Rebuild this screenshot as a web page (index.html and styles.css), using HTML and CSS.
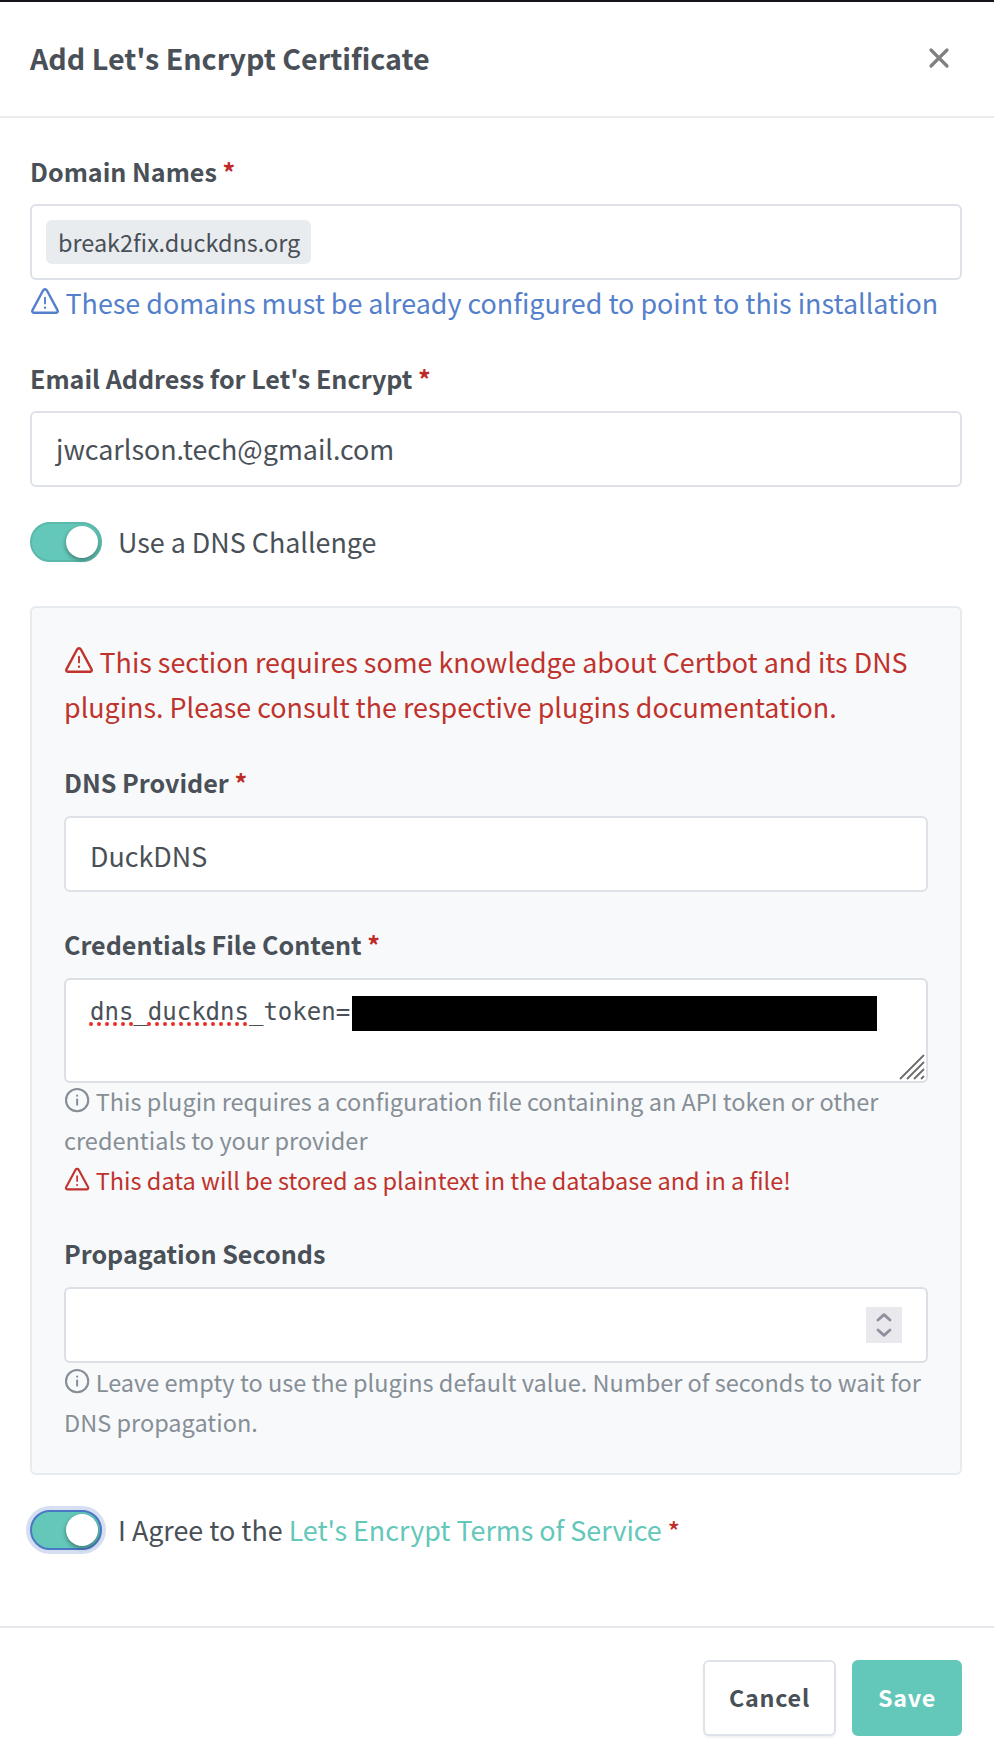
FILE: index.html
```html
<!DOCTYPE html>
<html lang="en">
<head>
<meta charset="utf-8">
<title>Add Let's Encrypt Certificate</title>
<link rel="stylesheet" href="styles.css">
</head>
<body>
<svg width="0" height="0" class="sprite" aria-hidden="true">
  <symbol id="warn" viewBox="0 0 30 30">
    <path d="M13.2 4.3a2.1 2.1 0 0 1 3.6 0L27.6 24.4a1.5 1.5 0 0 1-1.4 2.3H3.8a1.5 1.5 0 0 1-1.4-2.3z" stroke-width="2.4"/>
    <path d="M15 11.6v5.8" stroke-width="1.9"/>
    <path d="M15 21.7v.1" stroke-width="2.3"/>
  </symbol>
  <symbol id="info" viewBox="0 0 30 30">
    <circle cx="15" cy="15" r="12.7" stroke-width="2.4"/>
    <path d="M15 14.2v6" stroke-width="2.3"/>
    <path d="M15 9.9v.1" stroke-width="2.4"/>
  </symbol>
</svg>
<div class="modal">
  <header class="modal-header">
    <h5 class="title">Add Let's Encrypt Certificate</h5>
    <svg class="close" viewBox="0 0 20 20"><path d="M2 2l16 16M18 2L2 18"/></svg>
  </header>
  <main class="modal-body">
    <label class="label">Domain Names <span class="req">*</span></label>
    <div class="input tags"><span class="tag">break2fix.duckdns.org</span></div>
    <div class="note blue"><svg class="icon"><use href="#warn"/></svg>These domains must be already configured to point to this installation</div>

    <label class="label">Email Address for Let's Encrypt <span class="req">*</span></label>
    <div class="input email">jwcarlson.tech@gmail.com</div>

    <div class="switch-row"><span class="switch"><span class="knob"></span></span><span>Use a DNS Challenge</span></div>

    <section class="card">
      <div class="note red"><svg class="icon"><use href="#warn"/></svg>This section requires some knowledge about Certbot and its DNS<br>plugins. Please consult the respective plugins documentation.</div>

      <label class="label">DNS Provider <span class="req">*</span></label>
      <div class="input select">DuckDNS</div>

      <label class="label">Credentials File Content <span class="req">*</span></label>
      <div class="input textarea">
        <span class="code">dns_duckdns_token=<svg class="spell" viewBox="0 0 160 4"><path d="M2 2H44M60 2H157"/></svg></span><span class="redacted"></span>
        <svg class="grip" viewBox="0 0 26 26"><path d="M1 25L25 1M8 25L25 8M15 25L25 15M22 25L25 22"/></svg>
      </div>
      <div class="hint"><svg class="icon"><use href="#info"/></svg>This plugin requires a configuration file containing an API token or other<br>credentials to your provider</div>
      <div class="hint red"><svg class="icon"><use href="#warn"/></svg>This data will be stored as plaintext in the database and in a file!</div>

      <label class="label">Propagation Seconds</label>
      <div class="input number"><span class="spinner"><svg viewBox="0 0 36 36"><path d="M12 13l6-5.4 6 5.4M12 23l6 5.4 6-5.4"/></svg></span></div>
      <div class="hint last"><svg class="icon"><use href="#info"/></svg>Leave empty to use the plugins default value. Number of seconds to wait for<br>DNS propagation.</div>
    </section>

    <div class="switch-row agree"><span class="switch focus"><span class="knob"></span></span><span>I Agree to the <a class="link">Let's Encrypt Terms of Service</a> <span class="req thin">*</span></span></div>
  </main>
  <footer class="modal-footer">
    <button class="btn cancel">Cancel</button>
    <button class="btn save">Save</button>
  </footer>
</div>
</body>
</html>
```
FILE: styles.css
```css
* { box-sizing: border-box; }
body {
  margin: 0;
  background: #fff;
  color: #495057;
  font-family: "Noto Sans CJK SC", "Noto Sans", sans-serif;
  font-size: 26.87px;
  line-height: 45px;
}
.sprite { display: block; }
.sprite path, .sprite circle { fill: none; stroke: currentColor; stroke-linecap: round; stroke-linejoin: round; }
.modal { width: 994px; height: 1760px; border-top: 2px solid #17151c; overflow: hidden; }

.modal-header {
  display: flex;
  align-items: center;
  justify-content: space-between;
  height: 116px;
  padding: 0 45px 3px 30px;
  border-bottom: 2px solid #e9ecef;
}
.title { margin: 0; font-size: 28.67px; line-height: 45px; font-weight: 700; }
.close { width: 20px; height: 20px; margin-top: 1px; fill: none; stroke: #808080; stroke-width: 3.2; stroke-linecap: round; overflow: visible; }

.modal-body { padding: 34px 32px 0 30px; }
.label { display: block; height: 40px; margin-bottom: 12px; font-size: 25.1px; line-height: 38px; font-weight: 700; white-space: nowrap; }
.req { color: #bd2c27; }
.thin { font-size: 25px; font-weight: 500; }

.input {
  display: flex;
  align-items: center;
  height: 76px;
  padding: 0 24px;
  border: 2px solid #dee2e8;
  border-radius: 6px;
  background: #fff;
  white-space: nowrap;
}
.email { padding-bottom: 2px; }
.tags { padding: 0 14px; }
.tag { width: 265px; height: 44px; padding: 0 12px; border-radius: 6px; background: #e9ecef; font-size: 23.45px; line-height: 45px; }

.note { margin: 0 0 34px; white-space: nowrap; }
.blue { color: #5480cb; }
.red { color: #bf332c; }
.icon { width: 30px; height: 30px; margin: 0 5.5px 0 0; vertical-align: -1.5px; }

.switch-row { display: flex; align-items: center; gap: 16px; height: 40px; margin-top: 35px; line-height: 40px; white-space: nowrap; }
.switch { display: flex; justify-content: flex-end; width: 72px; height: 40px; padding: 2px 2px 0 0; border: 2px solid #5bb8aa; border-radius: 20px; background: #63c7b9; }
.knob { width: 32px; height: 32px; border-radius: 50%; background: #fff; box-shadow: 0 2px 4px rgba(0, 0, 0, .4); }
.focus { border-color: #4b78c6; box-shadow: 0 0 0 4px #d5dff1; }

.card {
  height: 869px;
  margin-top: 44px;
  padding: 31px 32px 0;
  border: 2px solid #e7eaee;
  border-radius: 6px;
  background: #f8f9fb;
}
.card .label { margin-bottom: 13px; }
.card .input + .label { margin-top: 33px; }
.select { padding-top: 2px; }
.textarea { align-items: flex-start; position: relative; height: 105px; padding: 15px 0 0 24px; border-color: #dae0e6; }
.code { position: relative; height: 36px; font: 24px/34px "DejaVu Sans Mono", monospace; }
.spell { position: absolute; left: -1px; top: 27px; width: 160px; height: 4px; fill: none; stroke: #ea2c25; stroke-width: 4; stroke-linecap: round; stroke-dasharray: 0 8; overflow: visible; }
.redacted { width: 525px; height: 35px; margin: .5px 0 0 1.5px; background: #000; }
.grip { position: absolute; right: 1px; bottom: 1px; width: 26px; height: 26px; fill: none; stroke: #6c6c6c; stroke-width: 1.8; }
.number { justify-content: flex-end; padding-right: 24px; border-color: #dae0e6; }
.spinner { display: flex; width: 36px; height: 36px; background: #e9e8ed; }
.spinner svg { width: 36px; height: 36px; fill: none; stroke: #8f8f9d; stroke-width: 2.8; stroke-linecap: round; stroke-linejoin: round; }

.hint { font-size: 23.52px; line-height: 39.4px; color: #868e96; white-space: nowrap; }
.hint.red { color: #bf332c; margin-bottom: 34px; }
.input + .hint { margin-top: -1px; }
.input + .hint.last { margin-top: 0; }
.hint .icon { width: 26.25px; height: 26.25px; vertical-align: -2px; }
.link { color: #63c7b9; }

.modal-footer { display: flex; justify-content: flex-end; gap: 16px; margin-top: 76px; padding: 32px 32px 0 0; border-top: 2px solid #e4e8ec; }
.btn { height: 76px; padding: 0 0 2px; border-radius: 6px; font: 700 23.3px/70px "Noto Sans CJK SC", sans-serif; letter-spacing: .75px; }
.cancel { width: 133px; border: 2px solid #dee2ea; background: #fff; color: #495057; box-shadow: 0 2px 2px rgba(0, 0, 0, .05); }
.save { width: 110px; border: 2px solid #63c7b9; background: #63c7b9; color: #fff; }
```
